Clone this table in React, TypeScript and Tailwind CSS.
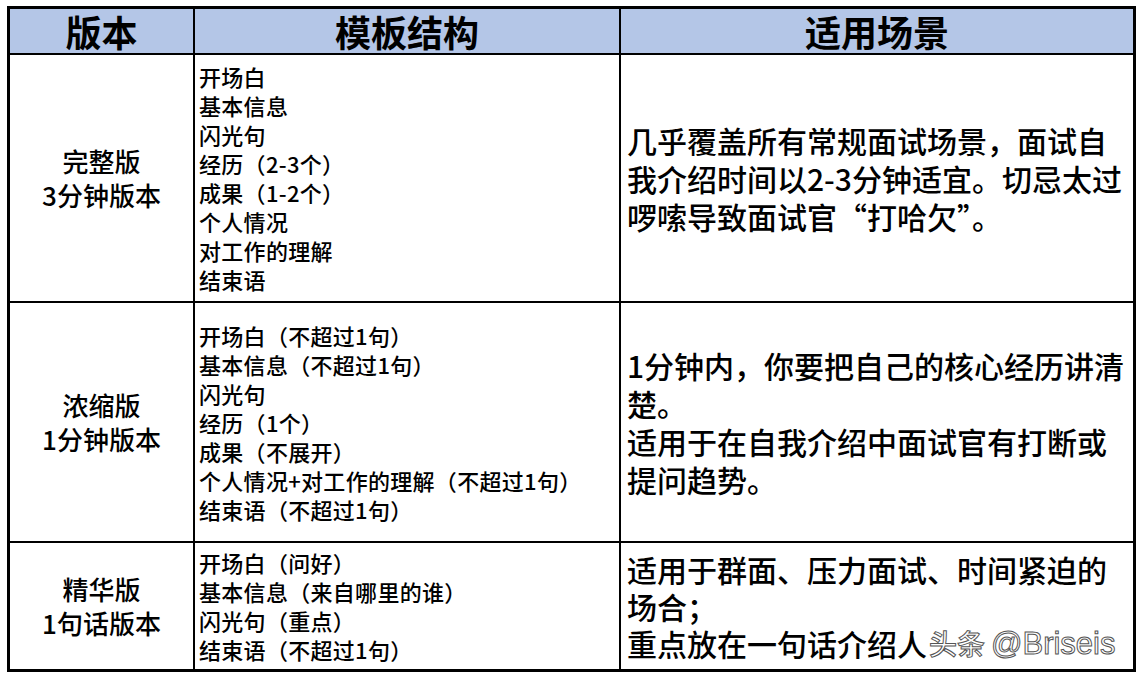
import React from "react";

const font = { fontFamily: '"Noto Sans CJK SC", "Noto Sans", sans-serif' };

const rows = [
  {
    name: ["完整版", "3分钟版本"],
    h: "h-[248px]",
    items: ["开场白", "基本信息", "闪光句", "经历（2-3个）", "成果（1-2个）", "个人情况", "对工作的理解", "结束语"],
    scene: ["几乎覆盖所有常规面试场景，面试自", "我介绍时间以2-3分钟适宜。切忌太过", "啰嗦导致面试官“打哈欠”。"],
  },
  {
    name: ["浓缩版", "1分钟版本"],
    h: "h-[240px]",
    items: [
      "开场白（不超过1句）",
      "基本信息（不超过1句）",
      "闪光句",
      "经历（1个）",
      "成果（不展开）",
      "个人情况+对工作的理解（不超过1句）",
      "结束语（不超过1句）",
    ],
    scene: ["1分钟内，你要把自己的核心经历讲清", "楚。", "适用于在自我介绍中面试官有打断或", "提问趋势。"],
  },
];

export default function App() {
  return (
    <div className="w-[1139px] h-[681px] bg-white pt-[6px] pl-[7px] text-black" style={font}>
      <div className="w-[1129px] border-[3px] border-black grid grid-cols-[185px_426px_512px]">
        {/* header */}
        <div className="h-[46px] bg-[#b4c6e7] border-r-2 border-b-2 border-black flex items-center justify-center text-[36px] font-semibold leading-[44px]">
          版本
        </div>
        <div className="h-[46px] bg-[#b4c6e7] border-r-2 border-b-2 border-black flex items-center justify-center text-[36px] font-semibold leading-[44px]">
          模板结构
        </div>
        <div className="h-[46px] bg-[#b4c6e7] border-b-2 border-black flex items-center justify-center text-[36px] font-semibold leading-[44px]">
          适用场景
        </div>

        {rows.map((r, i) => (
          <React.Fragment key={i}>
            <div className={`${r.h} border-r-2 border-b-2 border-black flex flex-col items-center justify-center text-[26px] leading-[34px] font-medium`}>
              {r.name.map((n) => (
                <div key={n}>{n}</div>
              ))}
            </div>
            <div className={`${r.h} border-r-2 border-b-2 border-black flex flex-col justify-center pl-[4px] text-[22px] leading-[29px] font-medium whitespace-nowrap tracking-[0.3px]`}>
              {r.items.map((t) => (
                <div key={t}>{t}</div>
              ))}
            </div>
            <div className={`${r.h} border-b-2 border-black flex flex-col justify-center pl-[6px] text-[30px] leading-[38px] font-medium whitespace-nowrap`}>
              {r.scene.map((t) => (
                <div key={t}>{t}</div>
              ))}
            </div>
          </React.Fragment>
        ))}

        {/* last row */}
        <div className="h-[126px] border-r-2 border-black flex flex-col items-center justify-center text-[26px] leading-[34px] font-medium">
          <div>精华版</div>
          <div>1句话版本</div>
        </div>
        <div className="h-[126px] border-r-2 border-black flex flex-col justify-center pl-[4px] text-[22px] leading-[29px] font-medium whitespace-nowrap tracking-[0.3px]">
          <div>开场白（问好）</div>
          <div>基本信息（来自哪里的谁）</div>
          <div>闪光句（重点）</div>
          <div>结束语（不超过1句）</div>
        </div>
        <div className="h-[126px] flex flex-col justify-center pl-[6px] text-[30px] leading-[37px] font-medium whitespace-nowrap">
          <div>适用于群面、压力面试、时间紧迫的</div>
          <div>场合；</div>
          <div className="flex items-center">
            <span>重点放在一句话介绍人</span>
            <span className="text-white [-webkit-text-stroke:1px_#555] text-[28px] ml-[2px]">头条</span>
            <span
              className="text-white [-webkit-text-stroke:1px_#555] text-[31px] ml-[6px]"
              style={{ fontFamily: '"Liberation Sans", Arial, sans-serif' }}
            >
              @Briseis
            </span>
          </div>
        </div>
      </div>
    </div>
  );
}
